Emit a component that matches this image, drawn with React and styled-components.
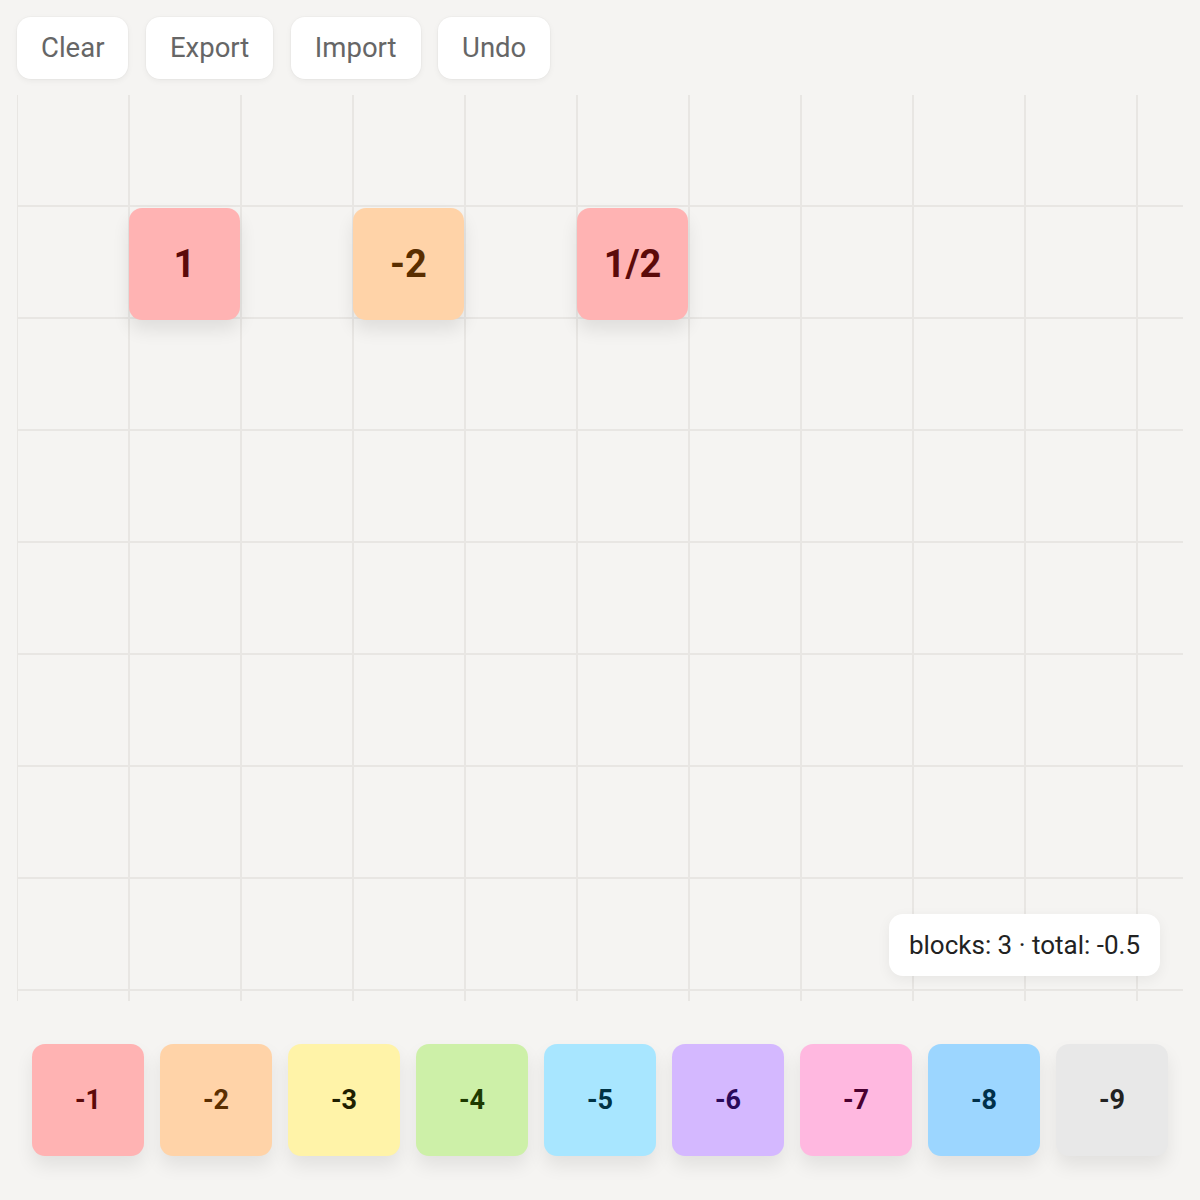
import React from "react";
import styled, { createGlobalStyle } from "styled-components";

const Global = createGlobalStyle`
  html, body { margin: 0; padding: 0; background: #f5f4f2; }
  body { font-family: Roboto, "Noto Sans", "Liberation Sans", sans-serif; }
  * { box-sizing: border-box; }
`;

const Page = styled.div`
  width: 1200px;
  height: 1200px;
  padding: 17px 17px 0 17px;
  display: flex;
  flex-direction: column;
  gap: 16px;
`;

const Toolbar = styled.div`
  display: flex;
  gap: 17.5px;
`;

const ToolButton = styled.button`
  font-family: Roboto, "Noto Sans", sans-serif;
  font-size: 27.5px;
  line-height: 34px;
  color: #666;
  background: #fff;
  border: none;
  border-radius: 14px;
  padding: 14px 24px;
  box-shadow: 0 2px 6px rgba(0, 0, 0, 0.05), 0 0 0 1px rgba(0, 0, 0, 0.02);
  cursor: pointer;
`;

const Canvas = styled.div`
  position: relative;
  width: 1166px;
  height: 906px;
  background-image:
    linear-gradient(to right, #e8e6e3 0, #e8e6e3 2px, transparent 2px),
    linear-gradient(to bottom, transparent 110.5px, #e8e6e3 110.5px, #e8e6e3 112px);
  background-size: 112px 112px;
  background-position: -1px 0;
`;

const Block = styled.div`
  position: absolute;
  width: 111px;
  height: 112px;
  border-radius: 13px;
  background: ${(p) => p.$bg};
  color: ${(p) => p.$fg};
  display: flex;
  align-items: center;
  justify-content: center;
  font-weight: 700;
  font-size: 38px;
  box-shadow: 0 10px 18px rgba(0, 0, 0, 0.09);
`;

const Status = styled.div`
  position: absolute;
  right: 23px;
  bottom: 25px;
  background: #fff;
  border-radius: 14px;
  padding: 14px 20px;
  font-size: 26px;
  line-height: 34px;
  color: #222;
  box-shadow: 0 4px 14px rgba(0, 0, 0, 0.06);
`;

const Palette = styled.div`
  display: flex;
  gap: 16px;
  padding: 27px 15px 0 15px;
`;

const Tile = styled.div`
  width: 112px;
  height: 112px;
  border-radius: 13px;
  background: ${(p) => p.$bg};
  color: ${(p) => p.$fg};
  display: flex;
  align-items: center;
  justify-content: center;
  font-weight: 700;
  font-size: 27px;
  box-shadow: 0 10px 18px rgba(0, 0, 0, 0.08);
`;

const blocks = [
  { label: "1", col: 1, row: 1, bg: "#ffb3b3", fg: "#5c0a0a" },
  { label: "-2", col: 3, row: 1, bg: "#ffd3a8", fg: "#5a2e00" },
  { label: "1/2", col: 5, row: 1, bg: "#ffb3b3", fg: "#5c0a0a" },
];

const tiles = [
  { label: "-1", bg: "#ffb3b3", fg: "#5c0a0a" },
  { label: "-2", bg: "#ffd3a8", fg: "#5a2e00" },
  { label: "-3", bg: "#fff3a8", fg: "#1f1f00" },
  { label: "-4", bg: "#cdf0a8", fg: "#1d3a00" },
  { label: "-5", bg: "#a8e6ff", fg: "#003344" },
  { label: "-6", bg: "#d4b8ff", fg: "#2a0a5a" },
  { label: "-7", bg: "#ffb8e0", fg: "#4a0030" },
  { label: "-8", bg: "#9cd6ff", fg: "#00304a" },
  { label: "-9", bg: "#e8e8e8", fg: "#222222" },
];

export default function App() {
  return (
    <>
      <Global />
      <Page>
        <Toolbar>
          <ToolButton>Clear</ToolButton>
          <ToolButton>Export</ToolButton>
          <ToolButton>Import</ToolButton>
          <ToolButton>Undo</ToolButton>
        </Toolbar>
        <Canvas>
          {blocks.map((b) => (
            <Block
              key={b.label}
              $bg={b.bg}
              $fg={b.fg}
              style={{ left: b.col * 112, top: b.row * 112 + 1 }}
            >
              {b.label}
            </Block>
          ))}
          <Status>blocks: 3 · total: -0.5</Status>
        </Canvas>
        <Palette>
          {tiles.map((t) => (
            <Tile key={t.label} $bg={t.bg} $fg={t.fg}>
              {t.label}
            </Tile>
          ))}
        </Palette>
      </Page>
    </>
  );
}
